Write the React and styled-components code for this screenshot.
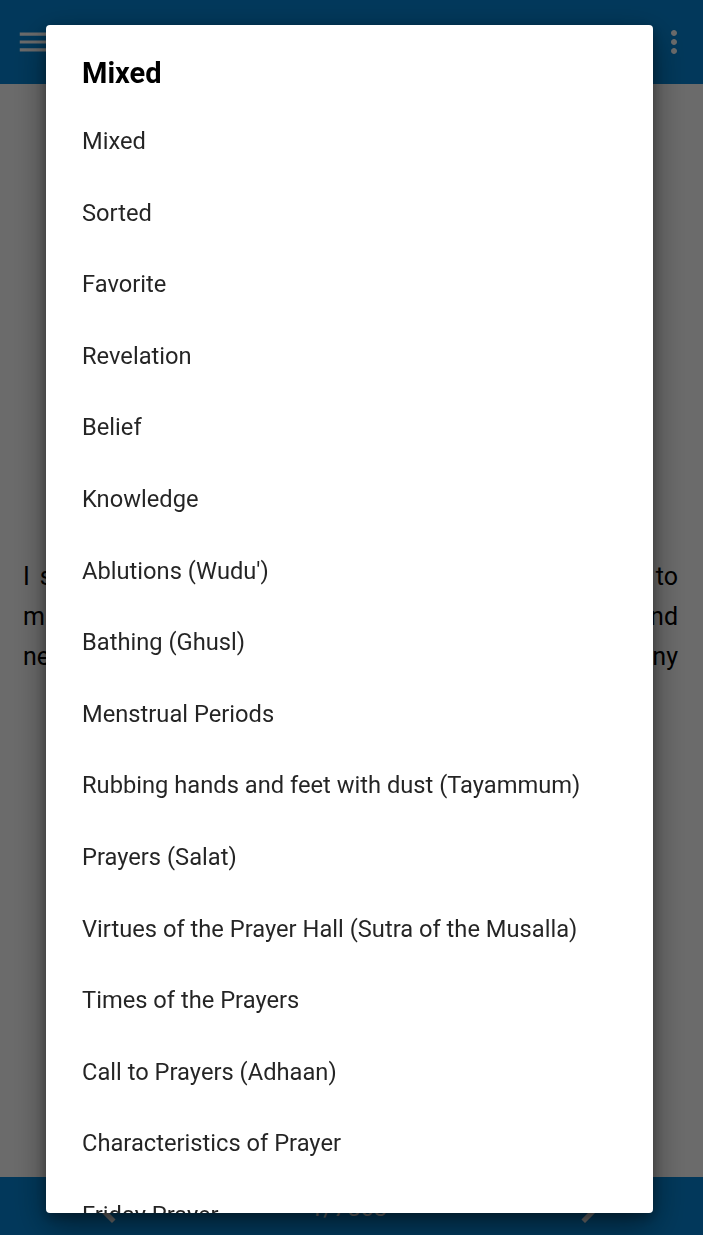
import React from 'react'
import styled, { createGlobalStyle } from 'styled-components'
import { MdMenu, MdMoreVert, MdChevronLeft, MdChevronRight } from 'react-icons/md'

const GlobalStyle = createGlobalStyle`
    html, body {
        margin: 0;
        padding: 0;
        height: 100%;
        overflow: hidden;
    }
    body {
        font-family: Roboto, "Noto Sans", sans-serif;
    }
    #root {
        height: 100%;
    }
`;

const Screen = styled.div`
    position: relative;
    height: 100vh;
    display: flex;
    flex-direction: column;
    background: #ffffff;
`;

const AppBar = styled.header`
    height: 84px;
    flex-shrink: 0;
    display: flex;
    align-items: center;
    justify-content: space-between;
    padding: 0 11px 0 15px;
    background: #0587d8;
    color: #ffffff;
`;

const BarIcon = styled.span`
    display: flex;
    color: #ffffff;
    font-size: ${p => p.$size}px;
`;

const Content = styled.main`
    flex: 1;
    padding: 473px 25px 0 23px;
    color: #000000;
    font-size: 25px;
    line-height: 40px;
`;

const Line = styled.div`
    text-align: justify;
    text-align-last: justify;
`;

const BottomBar = styled.footer`
    height: 58px;
    flex-shrink: 0;
    display: flex;
    align-items: center;
    justify-content: space-between;
    padding: 4px 83px 0 77px;
    box-sizing: border-box;
    background: #0587d8;
    color: #ffffff;
`;

const Counter = styled.span`
    font-size: 24px;
    color: #ffffff;
`;

const Scrim = styled.div`
    position: fixed;
    inset: 0;
    background: rgba(0, 0, 0, 0.58);
    display: flex;
    padding: 25px 50px 22px 46px;
`;

const Dialog = styled.div`
    flex: 1;
    background: #ffffff;
    border-radius: 4px;
    overflow: hidden;
    box-shadow: 0 12px 34px rgba(0, 0, 0, 0.45), 0 4px 12px rgba(0, 0, 0, 0.3);
`;

const Title = styled.h2`
    margin: 0;
    padding: 31px 34px 16px 36px;
    font-size: 29px;
    line-height: 34px;
    font-weight: 700;
    color: #000000;
`;

const List = styled.ul`
    list-style: none;
    margin: 0;
    padding: 0;
`;

const Item = styled.li`
    height: 71.6px;
    line-height: 71.6px;
    padding: 0 34px 0 36px;
    font-size: 23.7px;
    color: rgba(0, 0, 0, 0.86);
    white-space: nowrap;
`;

const categories = [
    'Mixed',
    'Sorted',
    'Favorite',
    'Revelation',
    'Belief',
    'Knowledge',
    "Ablutions (Wudu')",
    'Bathing (Ghusl)',
    'Menstrual Periods',
    'Rubbing hands and feet with dust (Tayammum)',
    'Prayers (Salat)',
    'Virtues of the Prayer Hall (Sutra of the Musalla)',
    'Times of the Prayers',
    'Call to Prayers (Adhaan)',
    'Characteristics of Prayer',
    'Friday Prayer',
    'Fear Prayer',
    'The Two Festivals (Eids)',
];

const App = () => {
    return (
        <>
            <GlobalStyle />
            <Screen>
                <AppBar>
                    <BarIcon $size={38}><MdMenu /></BarIcon>
                    <BarIcon $size={36}><MdMoreVert /></BarIcon>
                </AppBar>
                <Content>
                    <Line>I said: teach me an invocation so that I call upon You to</Line>
                    <Line>make in my prayer. He said: say, I have wronged and</Line>
                    <Line>never is a sin forgiven except by You, so forgive many</Line>
                </Content>
                <BottomBar>
                    <BarIcon $size={60}><MdChevronLeft /></BarIcon>
                    <Counter>1/7563</Counter>
                    <BarIcon $size={60}><MdChevronRight /></BarIcon>
                </BottomBar>
                <Scrim>
                    <Dialog>
                        <Title>Mixed</Title>
                        <List>
                            {categories.map((name, index) => (
                                <Item key={index}>{name}</Item>
                            ))}
                        </List>
                    </Dialog>
                </Scrim>
            </Screen>
        </>
    )
}

export default App
